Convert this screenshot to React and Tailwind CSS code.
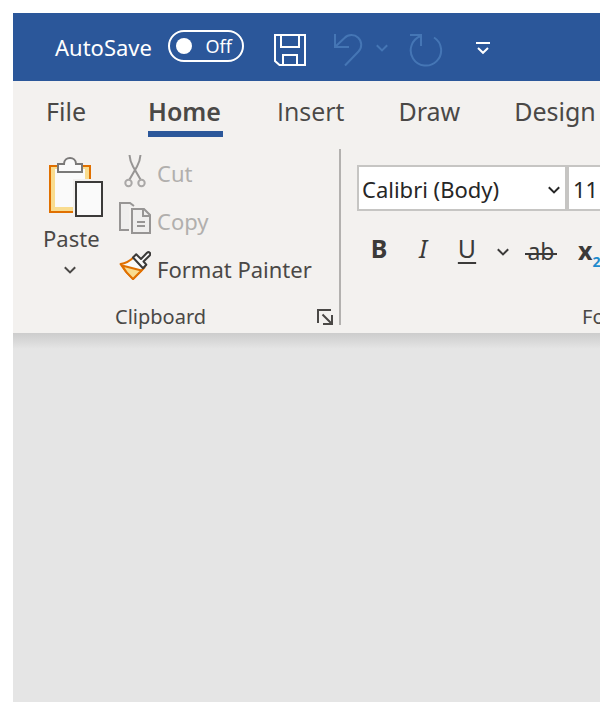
import React from "react";

function Chevron({ className = "" }) {
  return (
    <svg width="14" height="10" viewBox="0 0 14 10" className={`shrink-0 ${className}`} fill="none" stroke="currentColor" strokeWidth="2" aria-hidden="true">
      <path d="M1.8 2.2 7 7.4l5.200-5.200" />
    </svg>
  );
}

function SaveIcon() {
  return (
    <svg width="32" height="32" viewBox="0 0 32 32" fill="none" stroke="currentColor" strokeWidth="2" aria-hidden="true">
      <path d="M1 1h30v30H5.500L1 27z" />
      <path d="M7 1v12h18V1M9 31V21h14v10" />
    </svg>
  );
}

function UndoIcon() {
  return (
    <svg width="30" height="34" viewBox="0 0 30 34" fill="none" stroke="currentColor" strokeWidth="2" aria-hidden="true">
      <path d="M2 1v13h14M2 14 11.500 5A9.700 9.700 0 0 1 25.500 18.500L12 32.500" />
    </svg>
  );
}

function RedoIcon() {
  return (
    <svg width="34" height="34" viewBox="0 0 34 34" fill="none" stroke="currentColor" strokeWidth="2" aria-hidden="true">
      <path d="M1 2h11v11M12 3A15.200 15.200 0 1 0 25 4.500" />
    </svg>
  );
}

function CustomizeIcon() {
  return (
    <svg width="14" height="14" viewBox="0 0 14 14" fill="none" stroke="currentColor" strokeWidth="2" aria-hidden="true">
      <path d="M0 2h14M2 7l5 4.800L12 7" />
    </svg>
  );
}

function PasteIcon() {
  return (
    <svg width="54" height="60" viewBox="0 0 54 60" aria-hidden="true">
      <path d="M1 9h40v46H1z" fill="#f9dc8f" stroke="#e07000" strokeWidth="2" />
      <path d="M6 12h30v38H6z" fill="#fafafa" />
      <path d="M24 22h30v38H24z" fill="#f3f1ef" />
      <path d="M9 7h6c0-8 12-8 12 0h6v8H9z" fill="#fafafa" stroke="#7a7978" strokeWidth="2" />
      <path d="M27 25h26v34H27z" fill="#fafafa" stroke="#3b3a39" strokeWidth="2" />
    </svg>
  );
}

function CutIcon() {
  return (
    <svg width="32" height="36" viewBox="0 0 32 36" fill="none" stroke="#979594" aria-hidden="true">
      <path d="M10.500 0c.3 4.500 1.600 8 3.500 11.500L21.800 25M21.500 0c-.3 4.500-1.600 8-3.500 11.500L10.200 25" strokeWidth="2" />
      <circle cx="9.500" cy="28" r="3.200" strokeWidth="2" stroke="#aaa8a7" />
      <circle cx="22.500" cy="28" r="3.200" strokeWidth="2" stroke="#aaa8a7" />
    </svg>
  );
}

function CopyIcon() {
  return (
    <svg width="32" height="38" viewBox="0 0 32 38" fill="#efeeed" stroke="#979594" strokeWidth="2" aria-hidden="true">
      <path d="M10 28H1V1h10l4 3" />
      <path d="M10 5h16v5H12v20h-2z" fill="#f3f1ef" stroke="none" />
      <path d="M13 7h12l6 6v18H13z" />
      <path d="M24 7v7h7M18 20h8M18 24h8" fill="none" />
    </svg>
  );
}

function PainterIcon() {
  return (
    <svg width="32" height="40" viewBox="0 0 32 40" strokeWidth="2" strokeLinejoin="round" aria-hidden="true">
      <path d="M1.500 15C7 14.500 12 11 15.500 7.500L25.500 18.500 14 30C9 25.500 5 21 1.500 15z" fill="#fafafa" stroke="#e07000" />
      <path d="M3 16.500 22.500 21.500 14 30C9.500 26 6 22 3 16.500z" fill="#f9dc8f" stroke="#e07000" />
      <path d="M14 8.500l3.200-3.200 4.800 4.700 6-6.200c2-1.700 4.300.5 2.700 2.700L24.500 12.500l2.800 3.200-3.300 3.500z" fill="#fafafa" stroke="#3b3a39" />
    </svg>
  );
}

function LauncherIcon() {
  return (
    <svg width="16" height="16" viewBox="0 0 16 16" fill="none" stroke="currentColor" strokeWidth="2" aria-hidden="true">
      <path d="M1 14V1h13M5.500 5.500 14 14M15 6v9H6" />
    </svg>
  );
}

function TitleBar() {
  return (
    <header className="flex h-[68px] shrink-0 items-center overflow-hidden bg-[#2b579a] pl-[42px] text-white">
      <span id="autosave" className="w-[113px] shrink-0 text-[22px] leading-8">AutoSave</span>
      <button type="button" role="switch" aria-checked="false" aria-labelledby="autosave" className="-mt-0.5 flex h-8 w-[76px] shrink-0 items-center justify-between rounded-full border-2 border-white pl-1.5 pr-2.5 text-lg leading-6">
        <span className="size-4 rounded-full bg-white" />
        Off
      </button>
      <button type="button" aria-label="Save" className="ml-[30px] mt-1.5 shrink-0"><SaveIcon /></button>
      <div className="ml-[27px] mt-1.5 flex shrink-0 items-center gap-3 text-[#4576b5]">
        <button type="button" disabled aria-label="Undo"><UndoIcon /></button>
        <button type="button" disabled aria-label="Undo history" className="-mt-1"><Chevron /></button>
        <button type="button" disabled aria-label="Redo" className="ml-2"><RedoIcon /></button>
      </div>
      <button type="button" aria-label="Customize Quick Access Toolbar" className="ml-[33px] mt-0.5 shrink-0"><CustomizeIcon /></button>
    </header>
  );
}

function Tabs() {
  const tab = "shrink-0 border-b-[6px] border-transparent pb-0.5 text-left leading-9";
  return (
    <nav aria-label="Ribbon tabs" className="flex h-[68px] items-start gap-[54px] overflow-hidden pl-[33px] pt-3 text-[25px] text-[#4a4846]">
      <button type="button" className={`${tab} w-12`}>File</button>
      <button type="button" aria-current="page" className="w-[75px] shrink-0 border-b-[6px] border-[#2b579a] pb-0.5 text-left font-semibold leading-9">Home</button>
      <button type="button" className={`${tab} font-['Open_Sans',sans-serif]`}>Insert</button>
      <button type="button" className={tab}>Draw</button>
      <button type="button" className={tab}>Design</button>
    </nav>
  );
}

function ClipboardGroup() {
  return (
    <section aria-label="Clipboard" className="flex h-[176px] w-[328px] shrink-0 flex-col justify-between border-r-2 border-[#b3b1af] pl-[30px]">
      <div className="flex">
        <button type="button" className="flex w-[76px] shrink-0 flex-col items-start pt-2 text-[22px] leading-7">
          <span className="ml-1.5"><PasteIcon /></span>
          <span className="mt-[7px]">Paste</span>
          <Chevron className="ml-5 mt-[13px]" />
        </button>
        <div className="flex flex-col text-[22px] leading-8">
          <button type="button" disabled className="flex h-12 items-center gap-1.5 text-[#b1afad]"><CutIcon />Cut</button>
          <button type="button" disabled className="flex h-12 items-center gap-1.5 text-[#b1afad]"><CopyIcon />Copy</button>
          <button type="button" className="flex h-12 items-center gap-1.5 whitespace-nowrap"><PainterIcon />Format Painter</button>
        </div>
      </div>
      <div className="flex items-center justify-between pl-[72px] pr-1.5 text-xl leading-4">
        <span>Clipboard</span>
        <button type="button" aria-label="Clipboard settings"><LauncherIcon /></button>
      </div>
    </section>
  );
}

function FontGroup() {
  return (
    <section aria-label="Font" className="flex h-[176px] min-w-[486px] flex-col justify-between pl-4 pt-4">
      <div>
        <div className="flex text-[22px] text-[#262626]">
          <div className="relative h-[46px] w-[210px] shrink-0">
            <select aria-label="Font name" className="h-full w-full appearance-none border-2 border-[#c6c5c3] bg-white pl-[3px] pr-8 pt-0.5">
              <option>Calibri (Body)</option>
            </select>
            <Chevron className="pointer-events-none absolute right-1.5 top-5" />
          </div>
          <select aria-label="Font size" className="h-[46px] w-20 appearance-none border-2 border-[#c6c5c3] bg-white pl-1 pt-0.5">
            <option>11</option>
          </select>
        </div>
        <div className="mt-[18px] flex h-[38px] items-center text-[25px] leading-9 text-[#3b3a39]">
          <button type="button" aria-label="Bold" className="w-11 shrink-0 font-bold">B</button>
          <button type="button" aria-label="Italic" className="w-11 shrink-0 italic">I</button>
          <button type="button" aria-label="Underline" className="w-11 shrink-0 underline decoration-2 underline-offset-4">U</button>
          <button type="button" aria-label="Underline style" className="ml-[7px] mt-2 shrink-0"><Chevron /></button>
          <button type="button" aria-label="Strikethrough" className="relative ml-[15px] mt-1.5 w-8 shrink-0 text-[23px]">
            ab
            <span className="absolute inset-x-0 top-5 h-0.5 bg-[#3b3a39]" />
          </button>
          <button type="button" aria-label="Subscript" className="ml-[21px] mt-1 flex shrink-0 items-end font-bold">
            x<span className="-mb-1 text-sm leading-5 text-[#1e8bcd]">2</span>
          </button>
        </div>
      </div>
      <div className="pl-[225px] text-xl leading-4">Font</div>
    </section>
  );
}

export default function App() {
  return (
    <div className="flex min-h-screen flex-col overflow-hidden bg-white pl-[13px] pt-[13px] font-['Noto_Sans',sans-serif] text-[#4a4846]">
      <TitleBar />
      <div className="bg-[#f3f1ef]">
        <Tabs />
        <div className="flex overflow-hidden pb-2">
          <ClipboardGroup />
          <FontGroup />
        </div>
      </div>
      <main className="flex-1 bg-[#e5e5e5]">
        <div className="h-4 bg-linear-to-b from-[#cccccc] to-[#e5e5e5]" />
      </main>
    </div>
  );
}
